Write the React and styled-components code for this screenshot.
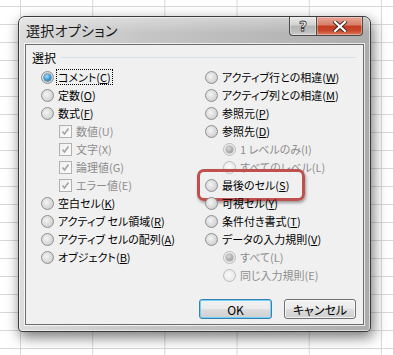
import React from 'react'
import styled, { createGlobalStyle } from 'styled-components'

const Global = createGlobalStyle`
  html, body {
    margin: 0;
    padding: 0;
  }
  body {
    width: 393px;
    height: 355px;
    overflow: hidden;
    background-color: #fff;
    background-image:
      linear-gradient(to right, #d6d8d9 1px, transparent 1px),
      linear-gradient(to bottom, #d6d8d9 1px, transparent 1px);
    background-size: 72.2px 18px;
    background-position: 20px 6px;
    font-family: "Noto Sans CJK JP", "Noto Sans", sans-serif;
    font-feature-settings: "palt";
  }
`

const Page = styled.div`
  padding: 16px 0 0 18px;
`

const Dialog = styled.div`
  box-sizing: border-box;
  width: 353px;
  height: 316px;
  border: 1px solid #3a3a3a;
  border-radius: 7px 7px 4px 4px;
  background: linear-gradient(to right, #dcdcdc 0%, #c6c6c6 35%, #adadad 100%);
  box-shadow: inset 0 0 0 1px rgba(255,255,255,0.55), 2px 5px 14px rgba(0,0,0,0.55);
  display: flex;
  flex-direction: column;
`

const TitleBar = styled.div`
  height: 27px;
  display: flex;
  align-items: flex-start;
  padding: 0 7px 0 7px;
  background: linear-gradient(to bottom, rgba(255,255,255,0.35), rgba(255,255,255,0) 60%);
  border-radius: 6px 6px 0 0;
`

const Title = styled.div`
  font-size: 14px;
  line-height: 27px;
  color: #1a1a1a;
  letter-spacing: 0.3px;
`

const Caption = styled.div`
  margin-left: auto;
  display: flex;
  height: 19px;
`

const CapButton = styled.div`
  box-sizing: border-box;
  width: ${p => p.$w}px;
  height: 19px;
  border: 1px solid #4a4a4a;
  border-top: none;
  display: flex;
  align-items: center;
  justify-content: center;
  background: ${p => p.$close
    ? 'linear-gradient(to bottom, #e7a797 0%, #d77d67 45%, #c23b1f 50%, #c9462a 75%, #dc7a5e 100%)'
    : 'linear-gradient(to bottom, #e9e9e9 0%, #d2d2d2 45%, #b4b4b4 50%, #bdbdbd 80%, #cfcfcf 100%)'};
  border-radius: ${p => (p.$close ? '0 0 4px 0' : '0 0 0 4px')};
  border-left: ${p => (p.$close ? 'none' : '1px solid #4a4a4a')};
  box-shadow: inset 0 0 0 1px rgba(255,255,255,0.35);
  font-family: "DejaVu Sans", sans-serif;
  font-weight: bold;
  font-size: 14px;
  color: #fff;
  -webkit-text-stroke: 0.8px #333;
`

const Client = styled.div`
  box-sizing: border-box;
  margin: 0 6px 6px 6px;
  height: 281px;
  background: #f0f0f0;
  border: 1px solid #6c6c6c;
  box-shadow: 0 0 0 1px rgba(255,255,255,0.75);
  padding: 4px 0 5px 0;
  display: flex;
  flex-direction: column;
  font-size: 11px;
  color: #000;
`

const GroupHeader = styled.div`
  height: 16px;
  display: flex;
  align-items: center;
  padding: 0 7px 0 6px;
  font-size: 12px;
`

const GroupLine = styled.div`
  flex: 1;
  height: 1px;
  margin-left: 5px;
  background: #d5dfe5;
`

const Columns = styled.div`
  margin-top: 3px;
  height: 216px;
  display: grid;
  grid-template-columns: 164px 1fr;
  padding-left: 15px;
`

const Column = styled.div`
  display: flex;
  flex-direction: column;
`

const Row = styled.div`
  position: relative;
  height: 18px;
  display: flex;
  align-items: center;
  padding-left: ${p => p.$indent || 0}px;
  color: ${p => (p.$disabled ? '#8d8d8d' : '#000')};
  white-space: nowrap;
`

const Radio = styled.span`
  box-sizing: border-box;
  flex: none;
  width: 13px;
  height: 13px;
  border-radius: 50%;
  border: 1px solid ${p => (p.$disabled ? '#bcbcbc' : '#8e8f8f')};
  background: ${p => p.$disabled
    ? 'radial-gradient(circle at 45% 45%, #fbfbfb 0%, #ececec 60%, #e0e0e0 100%)'
    : 'radial-gradient(circle at 40% 40%, #f4f4f4 0%, #dcdcdc 50%, #c2c2c2 100%)'};
  display: flex;
  align-items: center;
  justify-content: center;
  &::after {
    content: '';
    display: ${p => (p.$checked ? 'block' : 'none')};
    width: 7px;
    height: 7px;
    border-radius: 50%;
    background: ${p => p.$disabled
      ? 'radial-gradient(circle at 40% 35%, #d8d8d8, #a2a2a2 70%, #8c8c8c)'
      : 'radial-gradient(circle at 40% 35%, #a8e0fb, #3a98d6 55%, #14609e)'};
    box-shadow: 0 0 0 0.5px ${p => (p.$disabled ? '#9a9a9a' : '#1d5a8a')};
  }
`

const Check = styled.span`
  box-sizing: border-box;
  flex: none;
  width: 13px;
  height: 13px;
  border: 1px solid #b1b1b1;
  background: linear-gradient(135deg, #f0f0f0, #fbfbfb);
  display: flex;
  align-items: center;
  justify-content: center;
`

const Label = styled.span`
  margin-left: 2px;
  padding: 0 1px;
  line-height: 14px;
  border: 1px dotted ${p => (p.$focus ? '#000' : 'transparent')};
  u {
    text-decoration: ${p => (p.$disabled ? 'none' : 'underline')};
    text-underline-offset: 1px;
  }
`

const Highlight = styled.div`
  position: absolute;
  left: -8px;
  top: -7px;
  width: 108px;
  height: 32px;
  box-sizing: border-box;
  border: 3px solid #c0504d;
  border-radius: 7px;
  box-shadow: 1px 2px 3px rgba(0,0,0,0.35), inset 0 0 2px rgba(255,255,255,0.6);
  pointer-events: none;
`

const Footer = styled.div`
  margin-top: 15px;
  display: flex;
  justify-content: flex-end;
  gap: 12px;
  padding-right: 7px;
`

const Button = styled.div`
  box-sizing: border-box;
  width: ${p => p.$w}px;
  height: 20px;
  border-radius: 3px;
  border: 1px solid ${p => (p.$default ? '#3c7fb1' : '#707070')};
  background: linear-gradient(to bottom, #f2f2f2 0%, #ebebeb 48%, #dddddd 52%, #cfcfcf 100%);
  box-shadow: inset 0 0 0 1px ${p => (p.$default ? '#6fd3f7' : 'rgba(255,255,255,0.7)')};
  display: flex;
  align-items: center;
  justify-content: center;
  font-size: 12px;
`

const CheckMark = () => (
  <svg width="9" height="9" viewBox="0 0 9 9">
    <path d="M1.5 4.5 L3.5 7 L7.5 1.5" fill="none" stroke="#a3a3a3" strokeWidth="1.6" />
  </svg>
)

const CloseGlyph = () => (
  <svg width="14" height="11" viewBox="0 0 14 11">
    <path d="M2 1 L12 10 M12 1 L2 10" stroke="#3a2a26" strokeWidth="4" strokeLinecap="square" />
    <path d="M2 1 L12 10 M12 1 L2 10" stroke="#fff" strokeWidth="2.2" strokeLinecap="square" />
  </svg>
)

const left = [
  { label: <>コメント(<u>C</u>)</>, checked: true, focus: true },
  { label: <>定数(<u>O</u>)</> },
  { label: <>数式(<u>F</u>)</> },
  { box: true, indent: 18, disabled: true, label: <>数値(<u>U</u>)</> },
  { box: true, indent: 18, disabled: true, label: <>文字(<u>X</u>)</> },
  { box: true, indent: 18, disabled: true, label: <>論理値(<u>G</u>)</> },
  { box: true, indent: 18, disabled: true, label: <>エラー値(<u>E</u>)</> },
  { label: <>空白セル(<u>K</u>)</> },
  { label: <>アクティブ セル領域(<u>R</u>)</> },
  { label: <>アクティブ セルの配列(<u>A</u>)</> },
  { label: <>オブジェクト(<u>B</u>)</> },
]

const right = [
  { label: <>アクティブ行との相違(<u>W</u>)</> },
  { label: <>アクティブ列との相違(<u>M</u>)</> },
  { label: <>参照元(<u>P</u>)</> },
  { label: <>参照先(<u>D</u>)</> },
  { indent: 18, disabled: true, checked: true, label: <>1 レベルのみ(<u>I</u>)</> },
  { indent: 18, disabled: true, label: <>すべてのレベル(<u>L</u>)</> },
  { label: <>最後のセル(<u>S</u>)</>, highlight: true },
  { label: <>可視セル(<u>Y</u>)</> },
  { label: <>条件付き書式(<u>T</u>)</> },
  { label: <>データの入力規則(<u>V</u>)</> },
  { indent: 18, disabled: true, checked: true, label: <>すべて(<u>L</u>)</> },
  { indent: 18, disabled: true, label: <>同じ入力規則(<u>E</u>)</> },
]

const Option = ({ o }) => (
  <Row $indent={o.indent} $disabled={o.disabled}>
    {o.box ? (
      <Check><CheckMark /></Check>
    ) : (
      <Radio $checked={o.checked} $disabled={o.disabled} />
    )}
    <Label $focus={o.focus} $disabled={o.disabled}>{o.label}</Label>
    {o.highlight && <Highlight />}
  </Row>
)

const App = () => {
  return (
    <Page>
      <Global />
      <Dialog>
        <TitleBar>
          <Title>選択オプション</Title>
          <Caption>
            <CapButton $w={28}>?</CapButton>
            <CapButton $w={46} $close><CloseGlyph /></CapButton>
          </Caption>
        </TitleBar>
        <Client>
          <GroupHeader>
            <span>選択</span>
            <GroupLine />
          </GroupHeader>
          <Columns>
            <Column>
              {left.map((o, i) => <Option key={i} o={o} />)}
            </Column>
            <Column>
              {right.map((o, i) => <Option key={i} o={o} />)}
            </Column>
          </Columns>
          <Footer>
            <Button $w={73} $default>OK</Button>
            <Button $w={72}>キャンセル</Button>
          </Footer>
        </Client>
      </Dialog>
    </Page>
  )
}

export default App
